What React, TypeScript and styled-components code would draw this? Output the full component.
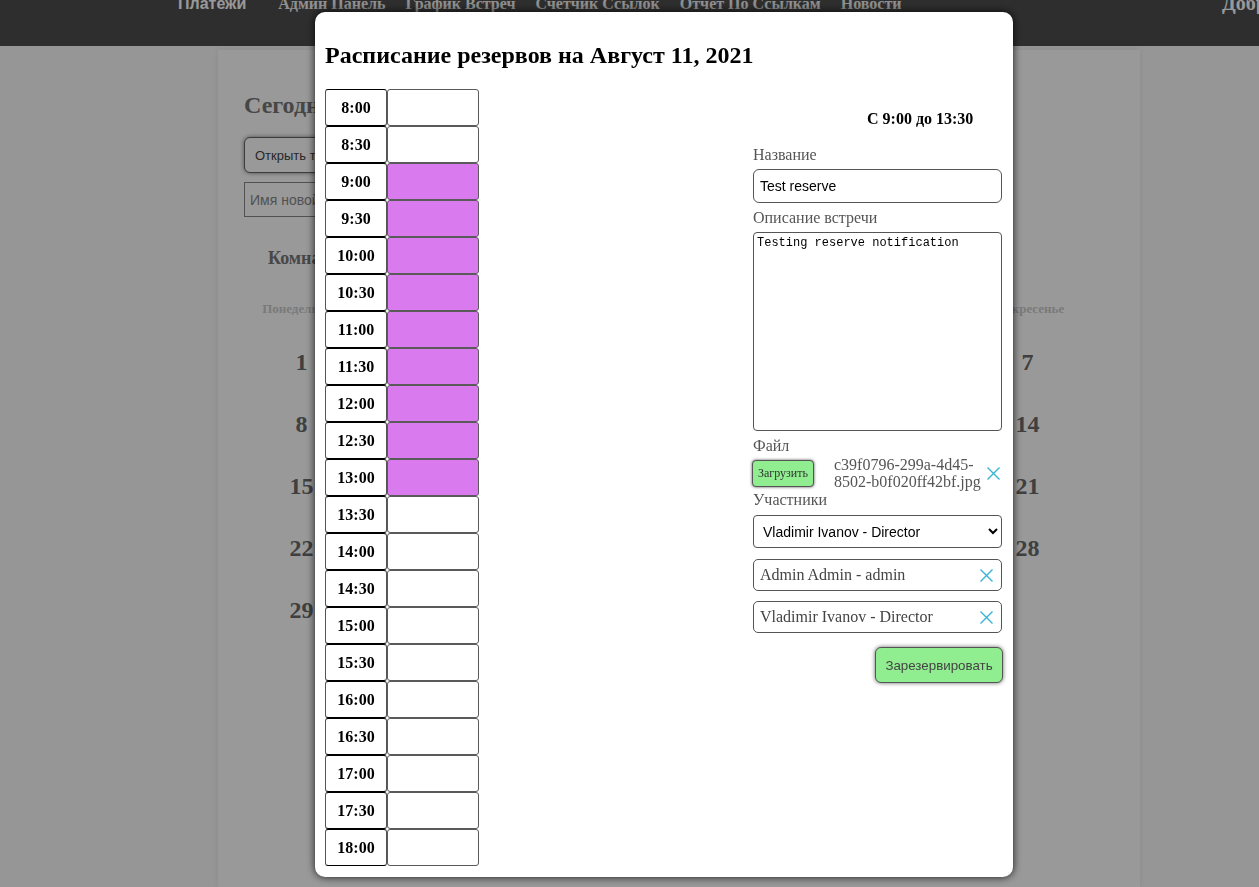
import styled, { createGlobalStyle } from "styled-components";

const GlobalStyle = createGlobalStyle`
  html, body {
    margin: 0;
    padding: 0;
    background: #fafafa;
    font-family: "Liberation Serif", "Times New Roman", serif;
    overflow: hidden;
  }
`;

const Page = styled.div`
  width: 100vw;
  height: 100vh;
  display: flex;
  flex-direction: column;
`;

const NavBar = styled.nav`
  height: 46px;
  flex-shrink: 0;
  background: #4d4d4d;
  display: flex;
  align-items: flex-start;
  padding-left: 178px;
  overflow: hidden;
`;

const NavLinks = styled.ul`
  display: flex;
  gap: 20px;
  margin: -5px 0 0;
  padding: 0;
  list-style: none;
`;

const NavLink = styled.li<{ $main?: boolean }>`
  font-family: ${(p) =>
    p.$main ? '"Liberation Sans", Arial, sans-serif' : '"Liberation Serif", serif'};
  font-weight: bold;
  font-size: 16px;
  line-height: 18px;
  color: ${(p) => (p.$main ? "#ffffff" : "#f0f0f0")};
  margin-right: ${(p) => (p.$main ? "12px" : "0")};
  white-space: nowrap;
`;

const Greeting = styled.div`
  margin: -8px 0 0 auto;
  padding-left: 20px;
  width: 37px;
  overflow: hidden;
  font-weight: bold;
  font-size: 20px;
  line-height: 22px;
  color: #ffffff;
  white-space: nowrap;
`;

const Card = styled.main`
  margin: 4px 0 0 218px;
  width: 922px;
  flex: 1;
  background: #ffffff;
  box-shadow: 0 0 6px rgba(0, 0, 0, 0.08);
  padding: 41px 26px 0;
  box-sizing: border-box;
`;

const Today = styled.h2`
  margin: 0;
  font-size: 24px;
  line-height: 28px;
  color: #777;
`;

const OpenButton = styled.button`
  display: block;
  margin-top: 18px;
  height: 36px;
  width: 170px;
  border: 1px solid #666;
  border-radius: 6px;
  background: #fff;
  box-shadow: 0 0 4px rgba(0, 0, 0, 0.5);
  font-family: "Liberation Sans", Arial, sans-serif;
  font-size: 13px;
  color: #444;
  text-align: left;
  padding-left: 10px;
`;

const NewRoomInput = styled.input`
  display: block;
  margin-top: 9px;
  height: 35px;
  width: 260px;
  box-sizing: border-box;
  border: 1px solid #888;
  padding: 0 5px;
  font-family: "Liberation Sans", Arial, sans-serif;
  font-size: 14px;
  &::placeholder {
    color: #888;
  }
`;

const Rooms = styled.h3`
  margin: 30px 0 0 24px;
  font-size: 18px;
  line-height: 22px;
  color: #777;
`;

const Calendar = styled.div`
  margin: 32px 0 0 -3px;
  width: 847px;
  display: grid;
  grid-template-columns: repeat(7, 1fr);
`;

const DayName = styled.div`
  text-align: center;
  font-weight: bold;
  font-size: 13px;
  line-height: 16px;
  color: #ccc;
  margin-bottom: 14px;
`;

const DayNumber = styled.div`
  height: 62px;
  display: flex;
  align-items: center;
  justify-content: center;
  font-weight: bold;
  font-size: 24px;
  color: #6a6a6a;
`;

const Overlay = styled.div`
  position: fixed;
  inset: 0;
  background: rgba(0, 0, 0, 0.4);
`;

const Modal = styled.div`
  position: fixed;
  top: 12px;
  left: 315px;
  width: 698px;
  height: 865px;
  box-sizing: border-box;
  padding: 9px 11px 0 10px;
  background: #ffffff;
  border-radius: 10px;
  box-shadow: 0 0 8px rgba(0, 0, 0, 0.85);
`;

const Title = styled.h2`
  margin: 20px 0;
  font-size: 24px;
  line-height: 28px;
  color: #000;
`;

const Body = styled.div`
  display: flex;
  align-items: flex-start;
`;

const Schedule = styled.div`
  display: flex;
  flex-direction: column;
`;

const SlotRow = styled.div`
  display: flex;
  height: 37px;
`;

const TimeCell = styled.div`
  width: 62px;
  box-sizing: border-box;
  border: 1px solid #555;
  border-top-color: #000;
  border-bottom-color: #000;
  border-radius: 3px;
  display: flex;
  align-items: center;
  justify-content: center;
  font-weight: bold;
  font-size: 16px;
  color: #000;
`;

const SlotCell = styled.div<{ $reserved?: boolean }>`
  width: 92px;
  box-sizing: border-box;
  border: 1px solid #5a5a5a;
  border-radius: 3px;
  background: ${(p) => (p.$reserved ? "#d97bee" : "#ffffff")};
`;

const Form = styled.form`
  margin-left: auto;
  width: 249px;
  display: flex;
  flex-direction: column;
`;

const Range = styled.div`
  margin-top: 21px;
  padding-left: 114px;
  font-weight: bold;
  font-size: 16px;
  line-height: 18px;
  color: #000;
  white-space: nowrap;
`;

const Label = styled.label<{ $gap: number }>`
  margin-top: ${(p) => p.$gap}px;
  font-size: 16px;
  line-height: 18px;
  color: #555;
`;

const TextInput = styled.input`
  margin-top: 5px;
  height: 34px;
  box-sizing: border-box;
  border: 1px solid #555;
  border-radius: 6px;
  padding: 0 6px;
  font-family: "Liberation Sans", Arial, sans-serif;
  font-size: 14px;
  color: #000;
  outline: none;
`;

const TextArea = styled.textarea`
  margin-top: 5px;
  height: 199px;
  box-sizing: border-box;
  border: 1px solid #555;
  border-radius: 4px;
  padding: 3px 3px;
  resize: none;
  font-family: "Liberation Mono", "DejaVu Sans Mono", monospace;
  font-size: 12px;
  line-height: 15px;
  color: #000;
  outline: none;
`;

const FileRow = styled.div`
  margin-top: 1px;
  display: flex;
  align-items: center;
`;

const UploadButton = styled.button`
  width: 62px;
  height: 27px;
  margin-left: -1px;
  padding: 0;
  background: #90ee90;
  border: 1px solid #555;
  border-radius: 4px;
  box-shadow: 0 0 3px rgba(0, 0, 0, 0.7);
  font-family: "Liberation Serif", serif;
  font-size: 12px;
  color: #333;
`;

const FileName = styled.div`
  margin-left: 20px;
  width: 150px;
  font-size: 16px;
  line-height: 17px;
  color: #555;
`;

const RemoveButton = styled.span`
  margin-left: auto;
  margin-right: 2px;
  display: flex;
`;

const Select = styled.select`
  margin-top: 6px;
  height: 33px;
  box-sizing: border-box;
  border: 1px solid #555;
  border-radius: 4px;
  padding: 0 5px;
  background: #fff;
  font-family: "Liberation Sans", Arial, sans-serif;
  font-size: 14px;
  color: #000;
`;

const Participant = styled.div<{ $gap: number }>`
  margin-top: ${(p) => p.$gap}px;
  height: 32px;
  box-sizing: border-box;
  border: 1px solid #555;
  border-radius: 5px;
  padding: 0 8px 0 6px;
  display: flex;
  align-items: center;
  justify-content: space-between;
  font-size: 16px;
  color: #444;
`;

const SubmitButton = styled.button`
  margin: 14px -1px 0 0;
  align-self: flex-end;
  width: 128px;
  height: 36px;
  background: #90ee90;
  border: 1px solid #555;
  border-radius: 6px;
  box-shadow: 0 0 4px rgba(0, 0, 0, 0.6);
  font-family: "Liberation Sans", Arial, sans-serif;
  font-size: 13.33px;
  color: #444;
`;

const CloseIcon = () => (
  <svg width="13" height="13" viewBox="0 0 13 13">
    <path d="M0.5 0.5 L12.5 12.5 M12.5 0.5 L0.5 12.5" stroke="#36b5d3" strokeWidth="1.4" fill="none" />
  </svg>
);

const navItems = ["Админ Панель", "График Встреч", "Счетчик Ссылок", "Отчет По Ссылкам", "Новости"];
const days = ["Понедельник", "Вторник", "Среда", "Четверг", "Пятница", "Суббота", "Воскресенье"];
const times = [
  "8:00", "8:30", "9:00", "9:30", "10:00", "10:30", "11:00", "11:30", "12:00", "12:30", "13:00",
  "13:30", "14:00", "14:30", "15:00", "15:30", "16:00", "16:30", "17:00", "17:30", "18:00",
];
const reserved = ["9:00", "9:30", "10:00", "10:30", "11:00", "11:30", "12:00", "12:30", "13:00"];

const App = () => {
  return (
    <>
      <GlobalStyle />
      <Page>
        <NavBar>
          <NavLinks>
            <NavLink $main>Платежи</NavLink>
            {navItems.map((item) => (
              <NavLink key={item}>{item}</NavLink>
            ))}
          </NavLinks>
          <Greeting>Добро пожаловать</Greeting>
        </NavBar>
        <Card>
          <Today>Сегодня Август 11, 2021</Today>
          <OpenButton>Открыть таблицу</OpenButton>
          <NewRoomInput placeholder="Имя новой комнаты" />
          <Rooms>Комнаты</Rooms>
          <Calendar>
            {days.map((d) => (
              <DayName key={d}>{d}</DayName>
            ))}
            {Array.from({ length: 31 }, (_, i) => (
              <DayNumber key={i}>{i + 1}</DayNumber>
            ))}
          </Calendar>
        </Card>
      </Page>
      <Overlay />
      <Modal>
        <Title>Расписание резервов на Август 11, 2021</Title>
        <Body>
          <Schedule>
            {times.map((t) => (
              <SlotRow key={t}>
                <TimeCell>{t}</TimeCell>
                <SlotCell $reserved={reserved.includes(t)} />
              </SlotRow>
            ))}
          </Schedule>
          <Form onSubmit={(e) => e.preventDefault()}>
            <Range>С 9:00 до 13:30</Range>
            <Label $gap={18}>Название</Label>
            <TextInput defaultValue="Test reserve" />
            <Label $gap={6}>Описание встречи</Label>
            <TextArea defaultValue="Testing reserve notification" />
            <Label $gap={6}>Файл</Label>
            <FileRow>
              <UploadButton type="button">Загрузить</UploadButton>
              <FileName>c39f0796-299a-4d45-8502-b0f020ff42bf.jpg</FileName>
              <RemoveButton>
                <CloseIcon />
              </RemoveButton>
            </FileRow>
            <Label $gap={1}>Участники</Label>
            <Select defaultValue="vi">
              <option value="vi">Vladimir Ivanov - Director</option>
              <option value="aa">Admin Admin - admin</option>
            </Select>
            <Participant $gap={11}>
              Admin Admin - admin
              <CloseIcon />
            </Participant>
            <Participant $gap={10}>
              Vladimir Ivanov - Director
              <CloseIcon />
            </Participant>
            <SubmitButton type="submit">Зарезервировать</SubmitButton>
          </Form>
        </Body>
      </Modal>
    </>
  );
};

export default App;
